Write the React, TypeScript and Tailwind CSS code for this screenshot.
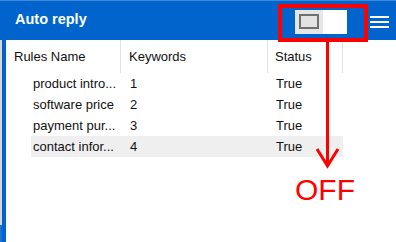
const rules = [
  { name: "product intro...", keyword: "1", status: "True" },
  { name: "software price", keyword: "2", status: "True" },
  { name: "payment pur...", keyword: "3", status: "True" },
  { name: "contact infor...", keyword: "4", status: "True" },
];

const App = () => {
  return (
    <div
      className="relative w-[396px] h-[242px] overflow-hidden bg-white flex flex-col"
      style={{ fontFamily: '"Liberation Sans", Arial, sans-serif' }}
    >
      {/* title bar */}
      <div className="h-[1px] bg-[#3d8ad9]" />
      <div className="h-[39px] bg-[#0064cc] flex items-center pl-[15px] pr-[7px]">
        <p className="text-white text-[14.5px] font-bold mt-[-2px]">Auto reply</p>
        <div className="flex-1" />
        <div className="w-[52px] h-[24px] flex mt-[2px]">
          <div className="w-[28px] h-full bg-[#e6e6e6] flex items-center pl-[4px]">
            <div className="w-[20px] h-[15px] border-2 border-[#6f6f6f] bg-[#e3e3e3]" />
          </div>
          <div className="flex-1 bg-white" />
        </div>
        <div className="ml-[23px] w-[19px] flex flex-col gap-[3px] mt-[2px]">
          <div className="h-[2px] bg-white" />
          <div className="h-[2px] bg-white" />
          <div className="h-[2px] bg-white" />
        </div>
      </div>

      {/* body */}
      <div className="flex-1 flex">
        <div className="w-[6px] flex">
          <div className="w-[2px] flex flex-col">
            <div className="h-[185px] bg-[#d6d6d6]" />
            <div className="flex-1 bg-[#1b73d0]" />
          </div>
          <div className="flex-1 bg-[#0064cc]" />
        </div>
        <div className="flex-1 flex flex-col text-[13px] text-[#111]">
          <div className="h-[33px] flex">
            <div className="w-[115px] pl-[8px] flex items-center border-r border-[#e3e3e3]">
              Rules Name
            </div>
            <div className="w-[147px] pl-[8px] flex items-center border-r border-[#e3e3e3]">
              Keywords
            </div>
            <div className="w-[75px] pl-[7px] flex items-center border-r border-[#e3e3e3]">
              Status
            </div>
          </div>
          {rules.map((rule, i) => (
            <div
              key={rule.name}
              className={`ml-[25px] w-[312px] h-[21px] flex items-center ${
                i === 3 ? "bg-[#efefef]" : ""
              }`}
            >
              <div className="w-[90px] pl-[2px] whitespace-nowrap">{rule.name}</div>
              <div className="w-[147px] pl-[9px]">{rule.keyword}</div>
              <div className="pl-[8px]">{rule.status}</div>
            </div>
          ))}
        </div>
      </div>

      {/* annotation */}
      <div className="absolute left-[278px] top-[4px] w-[90px] h-[38px] border-4 border-[#ff0000]" />
      <svg
        className="absolute left-0 top-0"
        width="396"
        height="242"
        viewBox="0 0 396 242"
      >
        <line x1="327.5" y1="42" x2="327.5" y2="165" stroke="#ff0000" strokeWidth="3" />
        <polyline
          points="317,149 327.5,166 338,149"
          fill="none"
          stroke="#ff0000"
          strokeWidth="3"
        />
      </svg>
      <p className="absolute left-[295px] top-[175px] text-[30px] leading-none text-[#ff0000]">
        OFF
      </p>
    </div>
  );
};

export default App;
